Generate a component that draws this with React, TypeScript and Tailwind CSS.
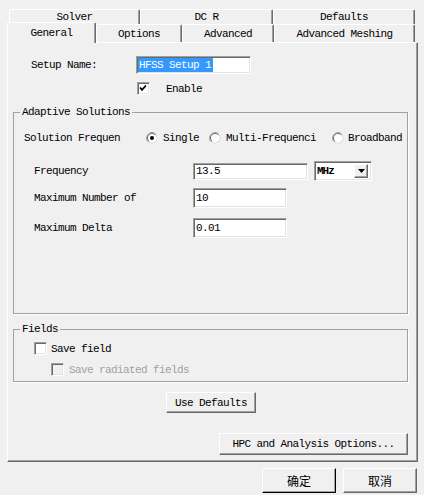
import React from 'react';

// classic 3D edges
const raised =
  'border border-t-white border-l-white border-r-[#696969] border-b-[#696969] shadow-[inset_-1px_-1px_0_#a0a0a0]';
const sunken =
  'border border-t-[#a0a0a0] border-l-[#a0a0a0] border-r-white border-b-white shadow-[inset_1px_1px_0_#696969,inset_-1px_-1px_0_#e3e3e3]';

function Tab({ w, label, active = false }: { w: string; label: string; active?: boolean }) {
  return (
    <div
      className={`${w} flex items-center justify-center rounded-t-[2px] border-t border-l border-r border-t-white border-l-white border-r-[#696969] shadow-[inset_-1px_0_0_#a0a0a0] bg-[#f0f0f0] ${
        active ? 'h-[21px] -mb-[1px] relative z-10 pb-[1px]' : 'h-full'
      }`}
    >
      {label}
    </div>
  );
}

function CheckBox({ checked = false, disabled = false }: { checked?: boolean; disabled?: boolean }) {
  return (
    <div
      className={`w-[13px] h-[13px] shrink-0 ${sunken} ${disabled ? 'bg-[#f0f0f0]' : 'bg-white'}`}
    >
      {checked && (
        <svg width="11" height="11" viewBox="0 0 11 11">
          <polyline points="2,4.5 4,6.8 8,2.5" fill="none" stroke="#000" strokeWidth="1.8" />
        </svg>
      )}
    </div>
  );
}

function Radio({ checked = false }: { checked?: boolean }) {
  return (
    <svg width="12" height="12" viewBox="0 0 12 12" className="shrink-0">
      <circle cx="6" cy="6" r="5.5" fill="#fff" stroke="#a0a0a0" />
      <path d="M10.2 1.8 A5.5 5.5 0 0 1 1.8 10.2" fill="none" stroke="#fff" />
      <path d="M2.8 9.2 A4.5 4.5 0 0 1 9.2 2.8" fill="none" stroke="#696969" />
      {checked && <circle cx="6" cy="6" r="2" fill="#000" />}
    </svg>
  );
}

export default function App() {
  return (
    <div className="w-[424px] h-[495px] overflow-hidden bg-[#f0f0f0] text-black text-[11px] leading-[12px] tracking-[-0.6px] font-['Liberation_Mono','Noto_Sans_CJK_SC',monospace]">
      {/* tab strip */}
      <div className="pt-[9px]">
        <div className="flex ml-[9px] h-[15px]">
          <Tab w="w-[131px]" label="Solver" />
          <Tab w="w-[133px]" label="DC R" />
          <Tab w="w-[142px]" label="Defaults" />
        </div>
        <div className="flex items-end ml-[7px] h-[18px]">
          <Tab w="w-[89px]" label="General" active />
          <Tab w="w-[86px]" label="Options" />
          <Tab w="w-[92px]" label="Advanced" />
          <Tab w="w-[141px]" label="Advanced Meshing" />
        </div>
      </div>

      {/* page */}
      <div className="ml-[7px] w-[411px] h-[420px] border border-t-white border-l-white border-r-[#696969] border-b-[#696969] shadow-[inset_-1px_-1px_0_#a0a0a0] flex flex-col">
        <div className="flex items-center h-[18px] mt-[13px] ml-[23px]">
          <span className="w-[105px]">Setup Name:</span>
          <div className={`${sunken} w-[115px] h-[18px] bg-white flex items-center pl-[1px]`}>
            <span className="bg-[#3399ff] text-white leading-[14px] pl-[1px] pr-[2px]">HFSS Setup 1</span>
          </div>
        </div>

        <div className="flex items-center mt-[8px] ml-[129px] h-[13px]">
          <CheckBox checked />
          <span className="ml-[16px]">Enable</span>
        </div>

        <fieldset className="mt-[11px] ml-[5px] w-[395px] h-[208px] border border-[#a0a0a0] shadow-[1px_1px_0_#fff]">
          <legend className="ml-[6px] px-[2px] leading-[12px]">Adaptive Solutions</legend>

          <div className="flex items-center h-[12px] mt-[14px] ml-[10px]">
            <span className="w-[97px] whitespace-nowrap">Solution Frequen</span>
            <div className="ml-[25px] w-[63px] flex items-center">
              <Radio checked />
              <span className="ml-[5px]">Single</span>
            </div>
            <div className="w-[123px] flex items-center">
              <Radio />
              <span className="ml-[5px] w-[96px] whitespace-nowrap">Multi-Frequenci</span>
            </div>
            <div className="flex items-center">
              <Radio />
              <span className="ml-[4px]">Broadband</span>
            </div>
          </div>

          <div className="flex items-center h-[20px] mt-[17px] ml-[20px]">
            <span className="w-[159px]">Frequency</span>
            <div className={`${sunken} w-[115px] h-[17px] bg-white flex items-center pl-[2px]`}>13.5</div>
            <div className={`${sunken} ml-[6px] w-[58px] h-[20px] bg-white flex items-center justify-between pl-[2px] pr-[3px]`}>
              <span className="font-bold tracking-[-1px]">MHz</span>
              <div className={`${raised} w-[14px] h-[14px] bg-[#f0f0f0] flex items-center justify-center`}>
                <svg width="7" height="4" viewBox="0 0 7 4">
                  <polygon points="0,0 7,0 3.5,4" fill="#000" />
                </svg>
              </div>
            </div>
          </div>

          <div className="flex items-center h-[20px] mt-[7px] ml-[20px]">
            <span className="w-[159px]">Maximum Number of</span>
            <div className={`${sunken} w-[94px] h-[20px] bg-white flex items-center pl-[2px]`}>10</div>
          </div>

          <div className="flex items-center h-[20px] mt-[10px] ml-[20px]">
            <span className="w-[159px]">Maximum Delta</span>
            <div className={`${sunken} w-[94px] h-[20px] bg-white flex items-center pl-[2px]`}>0.01</div>
          </div>
        </fieldset>

        <fieldset className="mt-[9px] ml-[5px] w-[395px] h-[59px] border border-[#a0a0a0] shadow-[1px_1px_0_#fff]">
          <legend className="ml-[6px] px-[2px] leading-[12px]">Fields</legend>
          <div className="flex items-center h-[13px] mt-[7px] ml-[20px]">
            <CheckBox />
            <span className="ml-[4px]">Save field</span>
          </div>
          <div className="flex items-center h-[13px] mt-[8px] ml-[37px] text-[#a0a0a0]">
            <CheckBox disabled />
            <span className="ml-[5px]">Save radiated fields</span>
          </div>
        </fieldset>

        <div className={`${raised} mt-[10px] ml-[158px] w-[90px] h-[21px] flex items-center justify-center`}>
          Use Defaults
        </div>

        <div className={`${raised} mt-[20px] ml-[211px] w-[189px] h-[22px] flex items-center justify-center`}>
          HPC and Analysis Options...
        </div>
      </div>

      {/* dialog buttons */}
      <div className="flex mt-[6px] ml-[262px] text-[12px] tracking-normal font-['Noto_Sans_CJK_SC',sans-serif]">
        <div className={`${raised} border-r-black border-b-black w-[74px] h-[25px] flex items-center justify-center`}>
          确定
        </div>
        <div className={`${raised} ml-[7px] w-[74px] h-[25px] flex items-center justify-center`}>
          取消
        </div>
      </div>
    </div>
  );
}
